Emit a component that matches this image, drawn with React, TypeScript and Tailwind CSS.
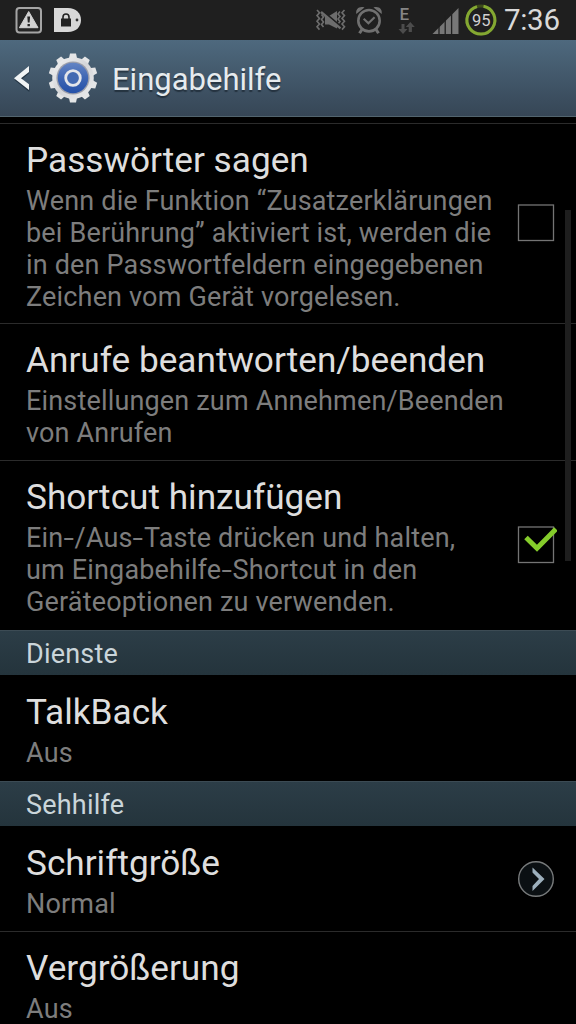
import clsx from "clsx";

type Row = {
  title: string;
  lines: string[];
  control?: "unchecked" | "checked" | "arrow";
  className: string;
};

const general: Row[] = [
  {
    title: "Passwörter sagen",
    lines: [
      "Wenn die Funktion “Zusatzerklärungen",
      "bei Berührung” aktiviert ist, werden die",
      "in den Passwortfeldern eingegebenen",
      "Zeichen vom Gerät vorgelesen.",
    ],
    control: "unchecked",
    className: "h-[200px] border-b pt-[15px]",
  },
  {
    title: "Anrufe beantworten/beenden",
    lines: ["Einstellungen zum Annehmen/Beenden", "von Anrufen"],
    className: "h-[137px] border-b pt-[15px]",
  },
  {
    title: "Shortcut hinzufügen",
    lines: [
      "Ein-/Aus-Taste drücken und halten,",
      "um Eingabehilfe-Shortcut in den",
      "Geräteoptionen zu verwenden.",
    ],
    control: "checked",
    className: "h-[169px] pt-[15px]",
  },
];

const services: Row[] = [{ title: "TalkBack", lines: ["Aus"], className: "h-[106px] pt-[16px]" }];

const vision: Row[] = [
  { title: "Schriftgröße", lines: ["Normal"], control: "arrow", className: "h-[106px] border-b pt-[16px]" },
  { title: "Vergrößerung", lines: ["Aus"], className: "h-[106px] pt-[15px]" },
];

function GearIcon() {
  const teeth = Array.from({ length: 10 }, (_, i) => i * 36);
  return (
    <svg width="50" height="50" viewBox="0 0 50 50" className="shrink-0">
      <defs>
        <linearGradient id="rim" x1="0" y1="0" x2="1" y2="1">
          <stop offset="0" stopColor="#f4f4f4" />
          <stop offset="0.5" stopColor="#d4d5d8" />
          <stop offset="1" stopColor="#ededee" />
        </linearGradient>
        <linearGradient id="disc" x1="0" y1="0" x2="0" y2="1">
          <stop offset="0" stopColor="#6384c4" />
          <stop offset="0.5" stopColor="#3f66b3" />
          <stop offset="1" stopColor="#2450a8" />
        </linearGradient>
      </defs>
      {teeth.map((a) => (
        <path key={a} d="M20.6 7 L22 0.6 H28 L29.4 7 Z" fill="#e4e5e6" transform={`rotate(${a} 25 25)`} />
      ))}
      <circle cx="25" cy="25" r="20.8" fill="url(#rim)" />
      <circle cx="25" cy="25" r="16.6" fill="#9c9fab" />
      <circle cx="25" cy="25" r="15.2" fill="url(#disc)" />
      <circle cx="25" cy="25" r="7.3" fill="#4269b2" stroke="#e3e5ea" strokeWidth="2.8" />
    </svg>
  );
}

function StatusBar() {
  return (
    <div className="flex h-10 shrink-0 items-center bg-[#1f1f1f]">
      <svg width="100" height="40" viewBox="0 0 100 40">
        <rect x="16.5" y="8" width="24.5" height="24.5" rx="3" fill="#252525" stroke="#a5a5a5" strokeWidth="2" />
        <path d="M28.7 11.5 L38 27.7 H19.4 Z" fill="#d2d2d2" stroke="#d2d2d2" strokeLinejoin="round" />
        <path d="M27.3 16.5 h2.8 l-0.5 6 h-1.8 z M27.5 24 h2.4 v2.2 h-2.4 z" fill="#252525" />
        <path d="M54 8 H68 C76 8 81 13 81 20 C81 27 76 32 68 32 H54 Z" fill="#d8d8d8" />
        <rect x="61" y="18.5" width="10" height="8" fill="#222" />
        <path d="M63 19 v-2 a3 3 0 0 1 6 0 v2" fill="none" stroke="#222" strokeWidth="1.6" />
        <circle cx="77" cy="20" r="1.4" fill="#333" />
      </svg>
      <svg width="404" height="40" viewBox="100 0 404 40">
        {/* vibrate, muted */}
        <g fill="none" stroke="#6d6d6d" strokeWidth="1.6">
          <path d="M317 10 l2.5 2.8 -2.5 2.8 2.5 2.8 -2.5 2.8 2.5 2.8 -2.5 2.8 2.5 2.8" />
          <path d="M321.5 14.5 l2 2.5 -2 2.5 2 2.5 -2 2.5 2 2.5" />
          <path d="M344.5 10 l-2.5 2.8 2.5 2.8 -2.5 2.8 2.5 2.8 -2.5 2.8 2.5 2.8 -2.5 2.8" />
          <path d="M340 11.5 l-2 2.5 2 2.5 -2 2.5 2 2.5 -2 2.5" />
        </g>
        <path d="M325 16 H329 L337 11 V28.5 L329 24.5 H325 Z" fill="#6d6d6d" />
        <path d="M322 10.5 L341 26.5" stroke="#1f1f1f" strokeWidth="1.8" />
        <path d="M321 12 L340.5 28.3" stroke="#6d6d6d" strokeWidth="2.4" />
        {/* alarm */}
        <g fill="none" stroke="#707070">
          <circle cx="369" cy="20.7" r="10.7" strokeWidth="2.6" />
          <path d="M363.7 18.8 L368.4 23.2 L374.6 17.3" strokeWidth="2.2" />
          <path d="M362 29.5 L359.5 33.3 M376 29.5 L378.5 33.3" strokeWidth="3" />
        </g>
        <path d="M356.3 14 C355.5 9 359 6 364.5 7.5 Z M381.7 14 C382.5 9 379 6 373.5 7.5 Z" fill="#707070" />
        {/* mobile data */}
        <text x="399.4" y="20" fill="#858585" fontSize="17" fontWeight="500" fontFamily="Roboto, sans-serif">
          E
        </text>
        <path d="M401.5 24 h3 v5 h3 l-4.5 5 -4.5 -5 h3 z M408.7 32 h3.2 v-5 h2.9 l-4.5 -5 -4.5 5 h2.9 z" fill="#4c4c4c" />
        {/* signal */}
        <path d="M432.5 34 L458.5 8 V34 Z" fill="#777" />
        <path d="M439 20 V35 M445.2 15 V35 M451.6 8 V35" stroke="#1f1f1f" strokeWidth="1.3" />
        {/* battery */}
        <circle cx="481" cy="20" r="14" fill="none" stroke="#3c4a1a" strokeWidth="3" />
        <path d="M483.5 6.3 A14 14 0 1 1 477 6.6" fill="none" stroke="#84a832" strokeWidth="3" />
        <text
          x="481.3"
          y="26"
          fill="#d0d0d0"
          fontSize="16.5"
          textAnchor="middle"
          fontFamily="Roboto, sans-serif"
        >
          95
        </text>
      </svg>
      <span className="text-[29.5px] leading-10 tracking-[-0.3px] text-[#d9d9d9]">7:36</span>
    </div>
  );
}

function Control({ type }: { type: Row["control"] }) {
  if (type === "arrow") {
    return (
      <svg width="40" height="38" viewBox="0 0 40 38">
        <circle cx="19" cy="19" r="17.3" fill="#0b1013" stroke="#777a7b" strokeWidth="1.4" />
        <path d="M15.5 7.5 L27.5 19 L15.5 31 V26 L22 19 L15.5 12.5 Z" fill="#9db0bd" />
      </svg>
    );
  }
  return (
    <svg width="40" height="38" viewBox="0 0 40 38">
      <rect x="1.5" y="1" width="35" height="35.5" fill="none" stroke="#747474" strokeWidth="1.3" />
      {type === "checked" && (
        <path d="M9 11.5 L20 22.3 L39 3" fill="none" stroke="#85cc2b" strokeWidth="5" />
      )}
    </svg>
  );
}

// Hyphens are drawn wider than the font's own
function SummaryLine({ text }: { text: string }) {
  return (
    <div>
      {text.split(/(-)/).map((part, i) =>
        part === "-" ? (
          <span key={i} className="mx-[1.8px] inline-block scale-x-140">
            -
          </span>
        ) : (
          part
        ),
      )}
    </div>
  );
}

function PreferenceRow({ row }: { row: Row }) {
  return (
    <div className={clsx("flex shrink-0 border-[#2b2b2b] pl-[26px] pr-[19px]", row.className)}>
      <div className="flex-1 whitespace-nowrap">
        <div className="text-[35.2px] leading-[42px] text-[#dedede]">{row.title}</div>
        <div className="mt-1 text-[27px] leading-8 tracking-[0.17px] text-[#7d7d7d]">
          {row.lines.map((line) => (
            <SummaryLine key={line} text={line} />
          ))}
        </div>
      </div>
      {row.control && (
        <div className="-mt-4 flex items-center">
          <Control type={row.control} />
        </div>
      )}
    </div>
  );
}

function SectionHeader({ label }: { label: string }) {
  return (
    <div className="flex h-[45px] shrink-0 items-center border-t border-[#3c4b54] bg-linear-to-b from-[#2c3d47] to-[#24343c] pl-[26px] pt-[2px] text-[27px] leading-8 tracking-[0.2px] text-[#cad5da]">
      {label}
    </div>
  );
}

export default function App() {
  return (
    <main className="relative flex h-[1024px] w-[576px] flex-col overflow-hidden bg-black font-['Roboto',sans-serif]">
      <StatusBar />

      <header className="flex h-[77px] shrink-0 items-center border-b border-[#53656f] bg-linear-to-b from-[#4e697e] to-[#364656]">
        <svg width="48" height="76" viewBox="0 0 48 76" className="shrink-0">
          <path d="M29.3 27.5 L14.5 40 L29.3 52 V46 L21.2 40 L29.3 33 Z" fill="#243544" />
          <path d="M29 26 L14 38.3 L29 50 V44.2 L21 38.3 L29 32 Z" fill="#f1f4f5" />
        </svg>
        <GearIcon />
        <h1 className="ml-[14px] mt-[3px] text-[31px] leading-9 text-[#e6ebee] [text-shadow:0_2px_1px_rgba(20,30,40,0.6)]">
          Eingabehilfe
        </h1>
      </header>

      <div className="mt-[6px] flex flex-col border-t border-[#2b2b2b]">
        {general.map((row) => (
          <PreferenceRow key={row.title} row={row} />
        ))}
        <SectionHeader label="Dienste" />
        {services.map((row) => (
          <PreferenceRow key={row.title} row={row} />
        ))}
        <SectionHeader label="Sehhilfe" />
        {vision.map((row) => (
          <PreferenceRow key={row.title} row={row} />
        ))}
      </div>

      {/* Scrollbar */}
      <div className="absolute right-[5px] top-[210px] h-[351px] w-[6px] bg-[#1e1e1e]" />
    </main>
  );
}
